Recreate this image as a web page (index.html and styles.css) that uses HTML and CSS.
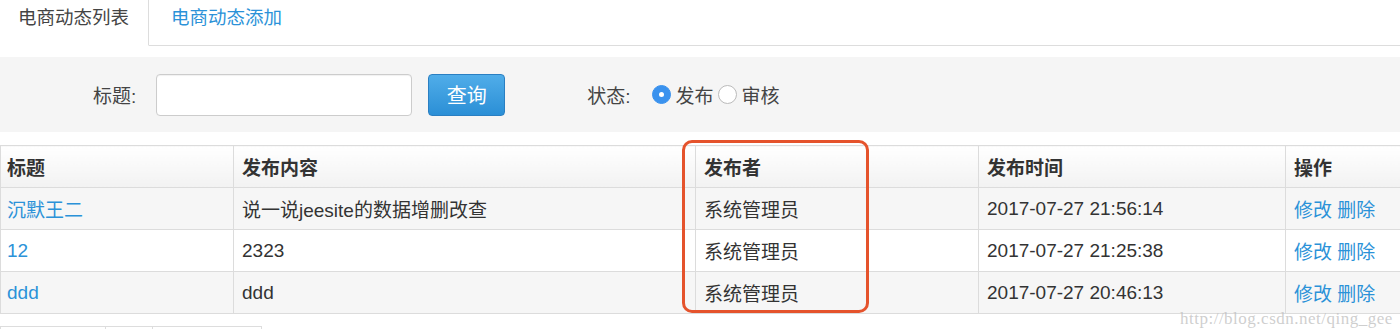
FILE: index.html
```html
<!DOCTYPE html>
<html lang="zh-CN">
<head>
    <meta charset="UTF-8">
    <title>电商动态列表</title>
    <link rel="stylesheet" href="styles.css">
</head>
<body>
    <div class="page">
        <ul class="nav-tabs">
            <li class="active"><a href="#">电商动态列表</a></li>
            <li><a href="#">电商动态添加</a></li>
        </ul>

        <form class="search-form">
            <label class="field-label">标题:</label>
            <input type="text" class="text-input">
            <button type="button" class="btn-primary">查询</button>
            <label class="field-label status-label">状态:</label>
            <span class="radio checked"></span><span class="radio-text">发布</span>
            <span class="radio"></span><span class="radio-text">审核</span>
        </form>

        <table class="data-table">
            <thead>
                <tr>
                    <th class="col-title">标题</th>
                    <th class="col-content">发布内容</th>
                    <th class="col-author">发布者</th>
                    <th class="col-time">发布时间</th>
                    <th>操作</th>
                </tr>
            </thead>
            <tbody>
                <tr>
                    <td><a href="#">沉默王二</a></td>
                    <td>说一说jeesite的数据增删改查</td>
                    <td>系统管理员</td>
                    <td>2017-07-27 21:56:14</td>
                    <td><a href="#">修改</a> <a href="#">删除</a></td>
                </tr>
                <tr>
                    <td><a href="#">12</a></td>
                    <td>2323</td>
                    <td>系统管理员</td>
                    <td>2017-07-27 21:25:38</td>
                    <td><a href="#">修改</a> <a href="#">删除</a></td>
                </tr>
                <tr>
                    <td><a href="#">ddd</a></td>
                    <td>ddd</td>
                    <td>系统管理员</td>
                    <td>2017-07-27 20:46:13</td>
                    <td><a href="#">修改</a> <a href="#">删除</a></td>
                </tr>
            </tbody>
        </table>

        <ul class="pagination">
            <li class="page-a"></li>
            <li class="page-b"></li>
            <li class="page-c"></li>
        </ul>

        <div class="highlight"></div>
        <div class="watermark">http://blog.csdn.net/qing_gee</div>
    </div>
</body>
</html>
```

FILE: styles.css
```css
body {
    margin: 0;
    padding: 0;
    background: #fff;
    color: #333;
    font-family: "Liberation Sans", "Noto Sans CJK SC", sans-serif;
    font-size: 19px;
    overflow: hidden;
}
a {
    color: #2b92d8;
    text-decoration: none;
}
.page {
    position: relative;
    width: 1400px;
    height: 329px;
    overflow: hidden;
}
.nav-tabs {
    display: flex;
    margin: 0;
    padding: 0;
    list-style: none;
    border-bottom: 1px solid #ddd;
    height: 45px;
}
.nav-tabs li {
    margin-right: 4px;
}
.nav-tabs a {
    display: block;
    height: 45px;
    line-height: 36px;
    padding: 0 19px 0 17px;
    font-size: 18.5px;
    box-sizing: border-box;
    border: 1px solid transparent;
    border-top: 0;
}
.nav-tabs li.active a {
    color: #444;
    background: #fff;
    border-color: #ddd;
    border-left-color: transparent;
    border-bottom-color: #fff;
    height: 46px;
}
.search-form {
    display: flex;
    align-items: center;
    margin: 11px 0 0;
    height: 75px;
    padding: 0 0 0 93px;
    background: #f5f5f5;
}
.field-label {
    color: #444;
    margin-right: 20px;
}
.text-input {
    width: 256px;
    height: 42px;
    box-sizing: border-box;
    border: 1px solid #ccc;
    border-radius: 4px;
    background: #fff;
    box-shadow: inset 0 1px 1px rgba(0, 0, 0, 0.06);
}
.btn-primary {
    margin-left: 16px;
    width: 77px;
    height: 42px;
    border: 1px solid #2a7fc2;
    border-radius: 4px;
    background: linear-gradient(#50ade9, #2b8fd6);
    color: #fff;
    font-family: inherit;
    font-size: 20px;
}
.status-label {
    margin-left: 82px;
    margin-right: 21px;
}
.radio {
    display: inline-block;
    width: 19px;
    height: 19px;
    box-sizing: border-box;
    border-radius: 50%;
    border: 1px solid #bbb;
    background: #fff;
    position: relative;
}
.radio.checked {
    border-color: #3a92ee;
    background: #3a92ee;
}
.radio.checked::after {
    content: "";
    position: absolute;
    left: 6px;
    top: 6px;
    width: 5px;
    height: 5px;
    border-radius: 50%;
    background: #fff;
}
.radio-text {
    margin-left: 5px;
    margin-right: 4px;
    color: #444;
}
.data-table {
    margin-top: 13px;
    width: 1420px;
    border-collapse: collapse;
    table-layout: fixed;
}
.data-table th,
.data-table td {
    height: 42px;
    padding: 0 8px;
    text-align: left;
    border: 1px solid #dcdcdc;
    box-sizing: border-box;
    white-space: nowrap;
}
.data-table th:first-child,
.data-table td:first-child {
    padding-left: 6px;
}
.data-table th {
    font-weight: bold;
    color: #333;
    background: linear-gradient(#fff, #f2f2f2);
}
.data-table tbody tr:nth-child(odd) td {
    background: #f6f6f6;
}
.data-table tbody tr:nth-child(even) td {
    background: #fff;
}
.col-title { width: 233px; }
.col-content { width: 462px; }
.col-author { width: 283px; }
.col-time { width: 307px; }
.pagination {
    display: flex;
    margin: 12px 0 0;
    padding: 0;
    list-style: none;
}
.pagination li {
    height: 20px;
    border: 1px solid #ddd;
    border-left: 0;
    box-sizing: border-box;
}
.pagination .page-a { width: 106px; border-left: 1px solid #ddd; }
.pagination .page-b { width: 47px; }
.pagination .page-c { width: 109px; }
.highlight {
    position: absolute;
    left: 682px;
    top: 140px;
    width: 187px;
    height: 173px;
    box-sizing: border-box;
    border: 3px solid #e5532c;
    border-radius: 10px;
}
.watermark {
    position: absolute;
    left: 1180px;
    top: 309px;
    font-family: "Liberation Serif", serif;
    font-size: 17px;
    color: rgba(190, 190, 190, 0.75);
    letter-spacing: 0.5px;
}
```
